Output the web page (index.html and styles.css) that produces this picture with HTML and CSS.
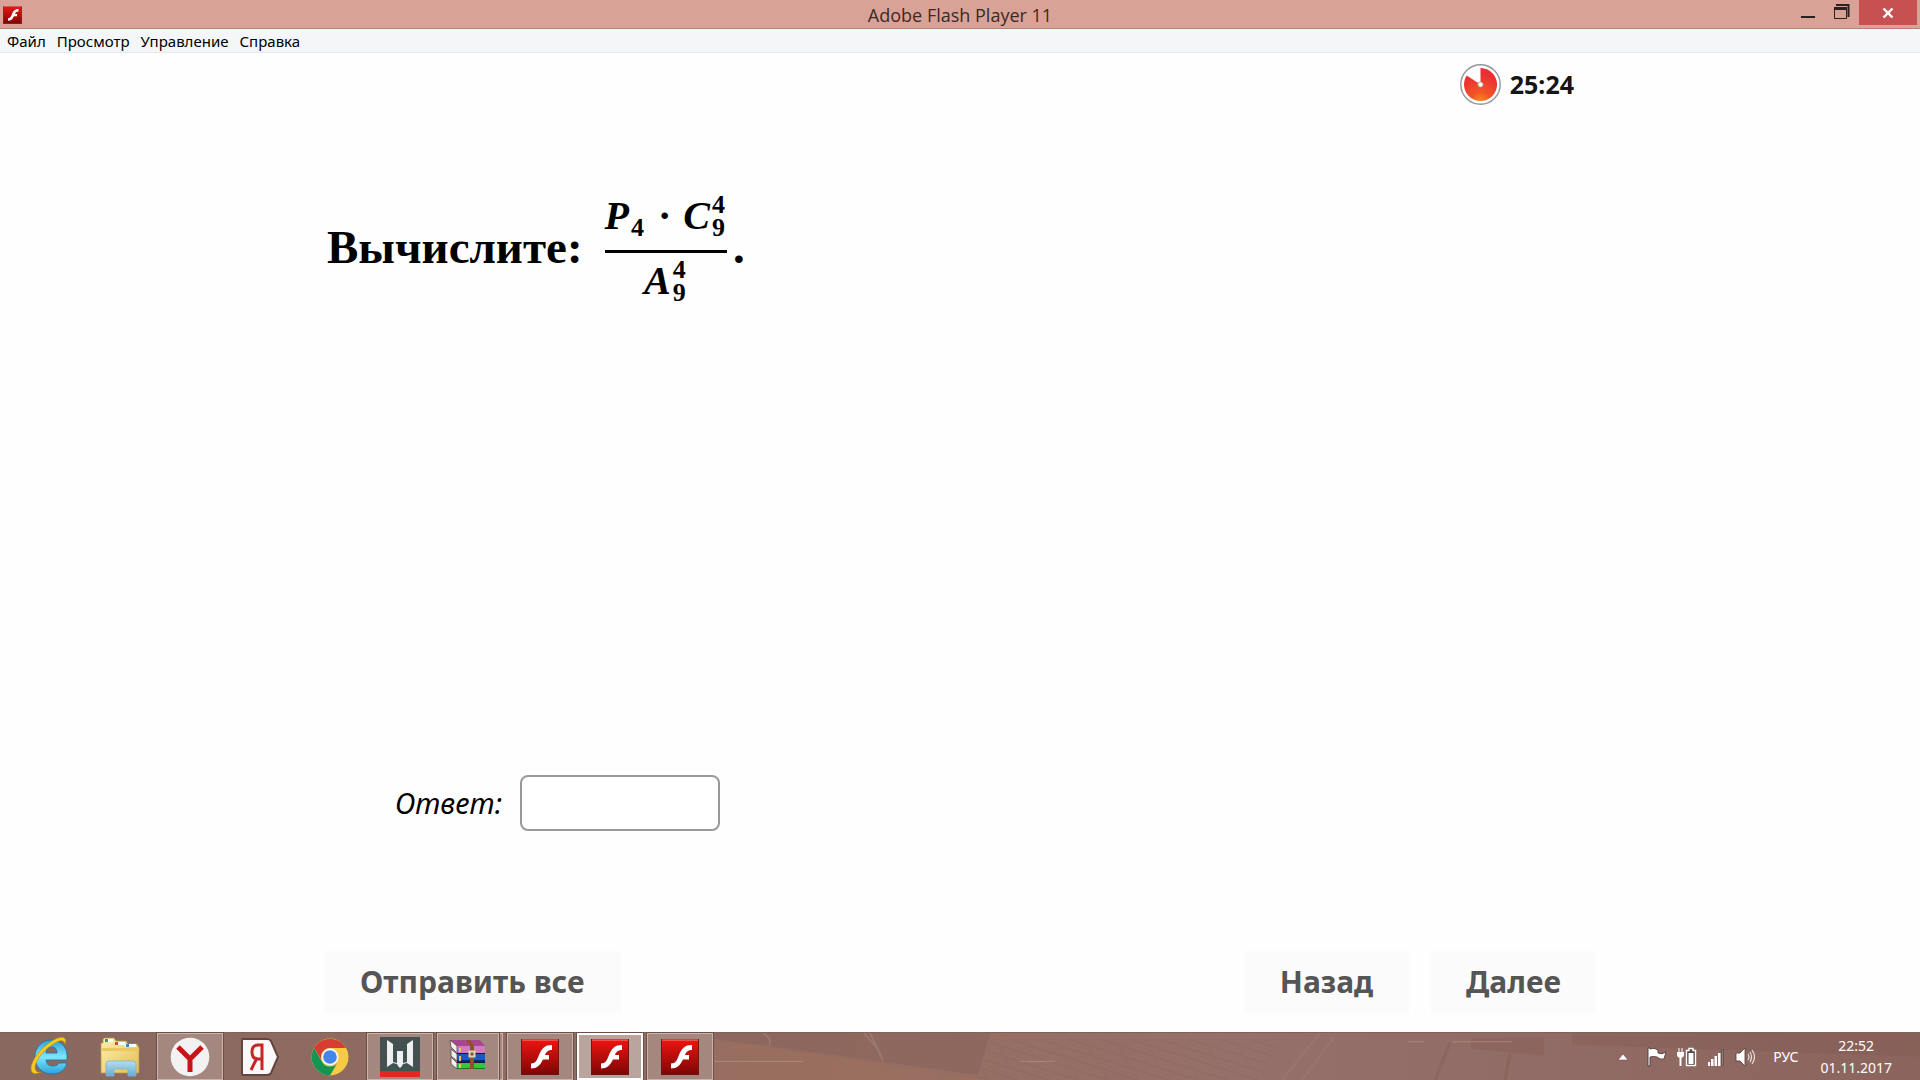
FILE: index.html
```html
<!DOCTYPE html>
<html lang="ru">
<head>
<meta charset="utf-8">
<title>Adobe Flash Player 11</title>
<link rel="stylesheet" href="styles.css">
</head>
<body>
<svg class="defs" aria-hidden="true">
  <defs>
    <linearGradient id="red" x1="0" y1="0" x2="0" y2="1"><stop offset="0" stop-color="#ee1512"/><stop offset="1" stop-color="#7d0604"/></linearGradient>
    <symbol id="flash" viewBox="0 0 38 36">
      <rect x=".5" y=".5" width="37" height="35" fill="url(#red)" stroke="#6d1512"/>
      <path d="M1 1h36" stroke="#f78a80"/>
      <path d="M31 6v5c-4 0-5.500 1.500-7 5h4v4.500h-6c-3 6-6 9-12 9v-5c4.500 0 6-3.500 8-8.500 3-7 6-10 13-10z" fill="#fff"/>
    </symbol>
  </defs>
</svg>

<header class="titlebar">
  <svg class="app-icon" viewBox="0 0 38 36" preserveAspectRatio="none"><use href="#flash"/></svg>
  <h1 class="title">Adobe Flash Player 11</h1>
  <div class="window-controls">
    <button class="control" aria-label="Свернуть"><svg width="14" height="20" viewBox="0 0 14 20"><path d="M0 17h14" stroke="#2c2020" stroke-width="2"/></svg></button>
    <button class="control" aria-label="Свернуть в окно"><svg width="16" height="20" viewBox="0 0 16 20"><path d="M2 5h12.500v12" fill="none" stroke="#2c2020" stroke-width="2"/><path d="M.5 8.500h12v10H.5z" fill="none" stroke="#2c2020"/><path d="M0 8.500h13" stroke="#2c2020" stroke-width="3"/></svg></button>
    <button class="control close" aria-label="Закрыть"><svg width="12" height="10" viewBox="0 0 12 10"><path d="M1.500 .5l9 9m0-9l-9 9" stroke="#fff" stroke-width="2.400"/></svg></button>
  </div>
</header>

<nav class="menu">
  <button>Файл</button><button>Просмотр</button><button>Управление</button><button>Справка</button>
</nav>

<main class="slide">
  <div class="timer">
    <svg width="41" height="41" viewBox="0 0 41 41">
      <defs><radialGradient id="pie" cx=".5" cy="1" r=".8"><stop offset="0" stop-color="#f68a1c"/><stop offset=".35" stop-color="#f25526"/><stop offset="1" stop-color="#ea2f34"/></radialGradient></defs>
      <circle cx="20.500" cy="20.500" r="19.700" fill="#fff" stroke="#96969c" stroke-width="1.400"/>
      <path d="M20.500 20.500V4A16.500 16.500 0 1 1 6.700 11.500z" fill="url(#pie)"/>
      <circle cx="20.500" cy="20.500" r="2.600" fill="#fff" stroke="#a9a0a0"/>
    </svg>
    <span>25:24</span>
  </div>

  <section class="question">
    <span class="prompt">Вычислите:</span>
    <span class="fraction">
      <span class="term numerator"><i>P</i><span class="scripts"><b></b><b>4</b></span><span class="times">·</span><i>C</i><span class="scripts"><b>4</b><b>9</b></span></span>
      <span class="term"><i>A</i><span class="scripts"><b>4</b><b>9</b></span></span>
    </span>
    <span class="prompt">.</span>
  </section>

  <div class="answer">
    <label for="answer">Ответ:</label>
    <input id="answer" type="text" autocomplete="off">
  </div>

  <div class="actions">
    <button>Отправить все</button>
    <button class="back">Назад</button>
    <button>Далее</button>
  </div>
</main>

<footer class="taskbar">
  <svg class="wallpaper" viewBox="0 0 1920 48" preserveAspectRatio="none" aria-hidden="true">
    <defs><pattern id="paving" width="30" height="12" patternUnits="userSpaceOnUse" patternTransform="skewX(30)"><path d="M0 0l30 12M0 12V0" stroke="#7d5850" stroke-width="1" fill="none" opacity=".3"/></pattern></defs>
    <path d="M708 6l280 42H708z" fill="#a1735f" opacity=".3"/>
    <path d="M710 0h280l-12 43L775 14l-65-9z" fill="#86625a" opacity=".5"/>
    <path d="M763 0q10 6 6 13M864 0l12 14 7 14M870 0l12 25" stroke="#b59b90" stroke-width="2" fill="none" opacity=".3"/>
    <path d="M992 6h290l-20 42H978z" fill="url(#paving)"/>
    <path d="M1320 0l-38 48M1334 4l-32 44" stroke="#a9867e" stroke-width="3" opacity=".2"/>
    <path d="M1471 5h73v18l-73-7zM1572 0h348v24L1572 12z" fill="#764f46" opacity=".2"/>
    <path d="M1450 10l-15 38M1510 21l-5 27" stroke="#795149" stroke-width="3" opacity=".25"/>
    <path d="M1408 9h16M1452 9h60M713 29h90M1020 29h35" stroke="#c0a090" stroke-width="1" opacity=".5"/>
  </svg>
  <div class="apps">
    <button class="app" aria-label="Internet Explorer"><svg width="40" height="40" viewBox="1 1 40 40">
      <defs><linearGradient id="ie" x1="0" y1="0" x2="0" y2="1"><stop offset="0" stop-color="#2f9fd6"/><stop offset=".5" stop-color="#7ee6fb"/><stop offset="1" stop-color="#2aa3dd"/></linearGradient></defs>
      <path d="M22 4C31 4 38 10 38 20v4H17c1 5 3 6 7 6 3 0 5-1 6-3h8c-2 7-7 11-15 11C13 38 6 31 6 21 6 11 13 4 22 4zM17 17h11c0-4-2-6-5-6-4 0-6 3-6 6z" fill="url(#ie)" stroke="#1775a8" stroke-width=".8" fill-rule="evenodd"/>
      <path d="M12 36C6 39 2 38 2 32 3 22 16 7 29 2c6-2 9 0 7 6-1-4-4-4-8-2C17 11 7 23 6 31c0 4 2 6 6 5z" fill="#f4cb25" stroke="#b98b0c" stroke-width=".6"/></svg></button>
    <button class="app" aria-label="Проводник"><svg width="40" height="40" viewBox="0 0 40 40">
      <defs><linearGradient id="folder" x1="0" y1="0" x2="1" y2="1"><stop offset="0" stop-color="#fff0ac"/><stop offset="1" stop-color="#e2bd55"/></linearGradient><linearGradient id="stand" x1="0" y1="0" x2="0" y2="1"><stop offset="0" stop-color="#b9dceb"/><stop offset="1" stop-color="#63add6"/></linearGradient></defs>
      <path d="M3 3q0-2 2-2h9l2 3h10l2 3h9l2 4v25H1V6h2z" fill="url(#folder)" stroke="#b59648" stroke-width=".7"/>
      <path d="M5 2h8v3H5zM15 5h10v3H15zM25 7h11v3H25z" fill="#fff"/><path d="M5 2h3v3H5z" fill="#3d9a5c"/><path d="M15 5h3v3h-3z" fill="#c95232"/><path d="M26 7h3v3h-3z" fill="#2f8ad0"/>
      <path d="M2 11h37v3H2z" fill="#e9c862"/>
      <path d="M6 27q0-3 3-3h24q3 0 3 3v12h-8v-7H14v7H6z" fill="url(#stand)" stroke="#7fb4cd" stroke-width=".8"/></svg></button>
    <button class="app running" aria-label="Яндекс.Браузер"><svg width="40" height="40" viewBox="0 0 40 40">
      <circle cx="20" cy="20" r="19.300" fill="#f3f2f2"/><path d="M8 10l12 12 12-12M20 20v15" fill="none" stroke="#c81418" stroke-width="5"/></svg></button>
    <button class="app" aria-label="Яндекс"><svg width="40" height="40" viewBox="0 0 40 40">
      <path d="M3 2h24q3 0 4 2l7 16-7 16q-1 2-4 2H3q-1 0-1-1V3q0-1 1-1z" fill="#faf8f8" stroke="#64443e" stroke-width="2"/>
      <path d="M22 33V8h-4q-6 0-6 7t6 7h4M17 21l-6 12" fill="none" stroke="#c92525" stroke-width="3"/></svg></button>
    <button class="app" aria-label="Google Chrome"><svg width="38" height="38" viewBox="0 0 38 38">
      <circle cx="19" cy="19" r="18.500" fill="#f7ca45"/>
      <path d="M3 10A18.500 18.500 0 0 1 35 10H19a9 9 0 0 0-8.500 12z" fill="#d63c32"/>
      <path d="M3 10a18.500 18.500 0 0 0 16 27.500L26.800 24a9 9 0 0 1-15.600 0z" fill="#159553"/>
      <circle cx="19" cy="19" r="8.500" fill="#f8f8f8"/><circle cx="19" cy="19" r="6.800" fill="#4485e8"/></svg></button>
    <button class="app running" aria-label="Warface"><svg width="40" height="40" viewBox="0 0 40 40">
      <path d="M0 0h40v34H0z" fill="#455053"/><path d="M0 34h40v6H0z" fill="#e52723"/>
      <path d="M7 3l6 4v18l4 1v-12h6v12l4-1V7l6-4v27l-6-4-4 1-1 2-2 2-2-2-1-2-4-1-6 4z" fill="#eef0f0"/></svg></button>
    <button class="app running stacked" aria-label="WinRAR"><svg width="38" height="38" viewBox="0 2 38 38">
      <path d="M1 4h30l5 6H8z" fill="#a8478d"/><path d="M8 10h28v5l-1 2H8z" fill="#d17ac0"/><path d="M8 18h28v6H8z" fill="#2455bd"/><path d="M8 24h28v3H8z" fill="#0c266c"/><path d="M8 27h28v5H8z" fill="#3bc33b"/><path d="M8 32h28v1H8z" fill="#167914"/>
      <path d="M1 4l7 6v7l-6-6zM2 13l6 5v7l-6-5zM2 21l6 6v6l-6-5z" fill="#f1f0ed" stroke="#54494a" stroke-width=".8"/>
      <path d="M8 17.500h28M8 26.500h28" stroke="#18153a"/><path d="M11 12v4m0 4v5m0 3v4" stroke="#e6c35d" stroke-width="2"/>
      <path d="M17 4l4 6v23h4V10l-4-6z" fill="#8c522c"/><path d="M20.500 15.500h5v5h-5z" fill="none" stroke="#ddd7b5" stroke-width="2"/></svg></button>
    <button class="app running" aria-label="Adobe Flash Player 11"><svg width="38" height="36"><use href="#flash"/></svg></button>
    <button class="app running active" aria-label="Adobe Flash Player 11"><svg width="38" height="36"><use href="#flash"/></svg></button>
    <button class="app running" aria-label="Adobe Flash Player 11"><svg width="38" height="36"><use href="#flash"/></svg></button>
  </div>
  <div class="tray">
    <button aria-label="Скрытые значки"><svg width="12" height="8" viewBox="0 0 12 8"><path d="M1 7l5-6 5 6z" fill="#fff" stroke="#6f5450" stroke-width=".6"/></svg></button>
    <button aria-label="Центр поддержки"><svg width="20" height="20" viewBox="0 0 20 20"><path d="M1 1h2v1q4-2 8 1v3q4 2 8-1l-2 7q-4 1-7-2-4-1-7 0v9H1z" fill="#fff" stroke="#503b38" stroke-width=".9"/></svg></button>
    <button aria-label="Батарея"><svg width="20" height="20" viewBox="0 0 20 20"><path d="M2 1v5M5 1v5" stroke="#fff"/><path d="M0 5h7v3q0 2-2.500 3v8h-2v-8Q0 10 0 8z" fill="#fff"/><path d="M9.500 3.500H12v-2h4v2h2.500v15h-9z" fill="#5a4642" stroke="#fff" stroke-width="1.400"/><path d="M11.500 6h5v11h-5z" fill="#fff"/></svg></button>
    <button aria-label="Сеть"><svg width="18" height="20" viewBox="0 0 18 20"><path d="M1 15h2v4H1zM4 12h2.500v7H4zM7.500 9h2.500v10H7.500zM11 6h2.500v13H11z" fill="#fff"/><path d="M14.500 2.500h2v16h-2z" fill="#8f7974" stroke="#665551"/></svg></button>
    <button aria-label="Громкость"><svg width="20" height="20" viewBox="0 0 20 20"><path d="M1 6h4l5-5v18l-5-5H1z" fill="#fff" stroke="#503b38" stroke-width=".8"/><path d="M13 7q2 3 0 6M15 5q3 5 0 10M17 3q5 7 0 14" fill="none" stroke="#eadfdd" stroke-width="1.200"/></svg></button>
    <button class="language">РУС</button>
    <button class="clock"><time>22:52</time><time>01.11.2017</time></button>
  </div>
</footer>
</body>
</html>
```

FILE: styles.css
```css
* { box-sizing: border-box; }

body {
  margin: 0;
  min-height: 100vh;
  display: flex;
  flex-direction: column;
  background: #fefefe;
  color: #000;
  font-family: "Noto Sans", "Open Sans", sans-serif;
}

button {
  margin: 0;
  padding: 0;
  border: 0;
  background: none;
  color: inherit;
  font: inherit;
}

svg { display: block; }
.defs { position: absolute; width: 0; height: 0; }

/* Window frame */
.titlebar {
  display: grid;
  grid-template-columns: 1fr auto 1fr;
  align-items: center;
  height: 29px;
  padding: 0 3px;
  background: #d8a396;
  border-bottom: 1px solid #b98078;
}

.app-icon { width: 19px; height: 18px; }

.title {
  margin: 0;
  color: #3b2927;
  font: 400 18px/30px "Open Sans", "Noto Sans", sans-serif;
}

.window-controls {
  display: flex;
  justify-content: flex-end;
  align-self: start;
}

.control {
  display: flex;
  justify-content: center;
  width: 34px;
  height: 25px;
}

.close {
  align-items: center;
  width: 58px;
  background: #c75050;
}

.menu {
  display: flex;
  gap: 11px;
  height: 24px;
  padding: 0 7px;
  background: #f4f6f8;
  border-bottom: 1px solid #e6e8ea;
  font-size: 15px;
  line-height: 24px;
}

/* Quiz slide */
.slide {
  flex: 1;
  display: flex;
  flex-direction: column;
  width: 100%;
  max-width: 1272px;
  margin: 0 auto;
  padding: 11px 0 19px;
}

.timer {
  display: flex;
  align-items: center;
  align-self: flex-end;
  gap: 9px;
  margin-right: 22px;
  color: #151515;
  font-size: 25px;
  font-weight: 700;
  line-height: 38px;
}

.timer span { margin-bottom: 2px; }

.question {
  display: flex;
  align-items: center;
  margin: 88px 0 32px 3px;
  font-family: "Liberation Serif", serif;
  font-weight: 700;
}

.prompt {
  padding-bottom: 8px;
  font-size: 47px;
  line-height: 52px;
}

.fraction {
  display: flex;
  flex-direction: column;
  margin: 0 6px 0 22px;
}

.term {
  display: flex;
  justify-content: center;
  align-items: center;
  height: 56px;
  font-size: 40px;
  line-height: 40px;
}

.numerator {
  height: 60px;
  padding-bottom: 12px;
  border-bottom: 3px solid #000;
}

.scripts {
  display: grid;
  grid-template-rows: 23px 23px;
  margin: 0 2px;
  font-size: 26px;
  line-height: 23px;
}

.times { padding: 0 12px; }

.answer {
  display: flex;
  align-items: center;
  gap: 18px;
  margin: auto 0 120px 71px;
  font-size: 29px;
  font-style: italic;
}

.answer label { padding-bottom: 2px; }

.answer input {
  width: 200px;
  height: 56px;
  padding: 0 12px;
  border: 2px solid #999;
  border-radius: 8px;
  background: #fff;
  font: inherit;
}

.actions {
  display: flex;
  gap: 22px;
}

.actions button {
  min-width: 165px;
  padding: 11px 36px;
  background: #fbfbfb;
  color: #555;
  font-size: 30px;
  font-weight: 700;
  line-height: 40px;
}

.actions .back { margin-left: auto; }

.actions .back,
.actions .back + button { padding: 11px 32px; }

/* Taskbar */
.taskbar {
  position: relative;
  display: flex;
  justify-content: space-between;
  height: 48px;
  padding: 0 28px 0 15px;
  background: linear-gradient(90deg, #896860, #966d61 45%, #95706a 65%, #8b645d);
  border-top: 1px solid #80615b;
  color: #fff;
}

.wallpaper {
  position: absolute;
  inset: 0;
  width: 100%;
  height: 100%;
}

.apps,
.tray {
  position: relative;
  display: flex;
}

.app {
  display: flex;
  align-items: center;
  justify-content: center;
  width: 66px;
  margin: 0 2px;
  border: 1px solid transparent;
}

.running {
  border-color: #c9b5ae;
  outline: 1px solid #6c4f49;
  background: #a4877f;
}

.stacked {
  width: 62px;
  margin-right: 6px;
  box-shadow: 4px 0 0 -1px #a4877f, 4px 0 0 0 #c9b5ae;
}

.active {
  border: 2px solid #fff;
  background: #b9a49e;
}

.tray {
  align-items: center;
  gap: 10px;
  font-size: 14px;
  line-height: 22px;
}

.tray button:first-child { margin-right: 8px; }

.language { margin: 0 12px 0 8px; }

.clock {
  display: flex;
  flex-direction: column;
  align-items: center;
}
```
